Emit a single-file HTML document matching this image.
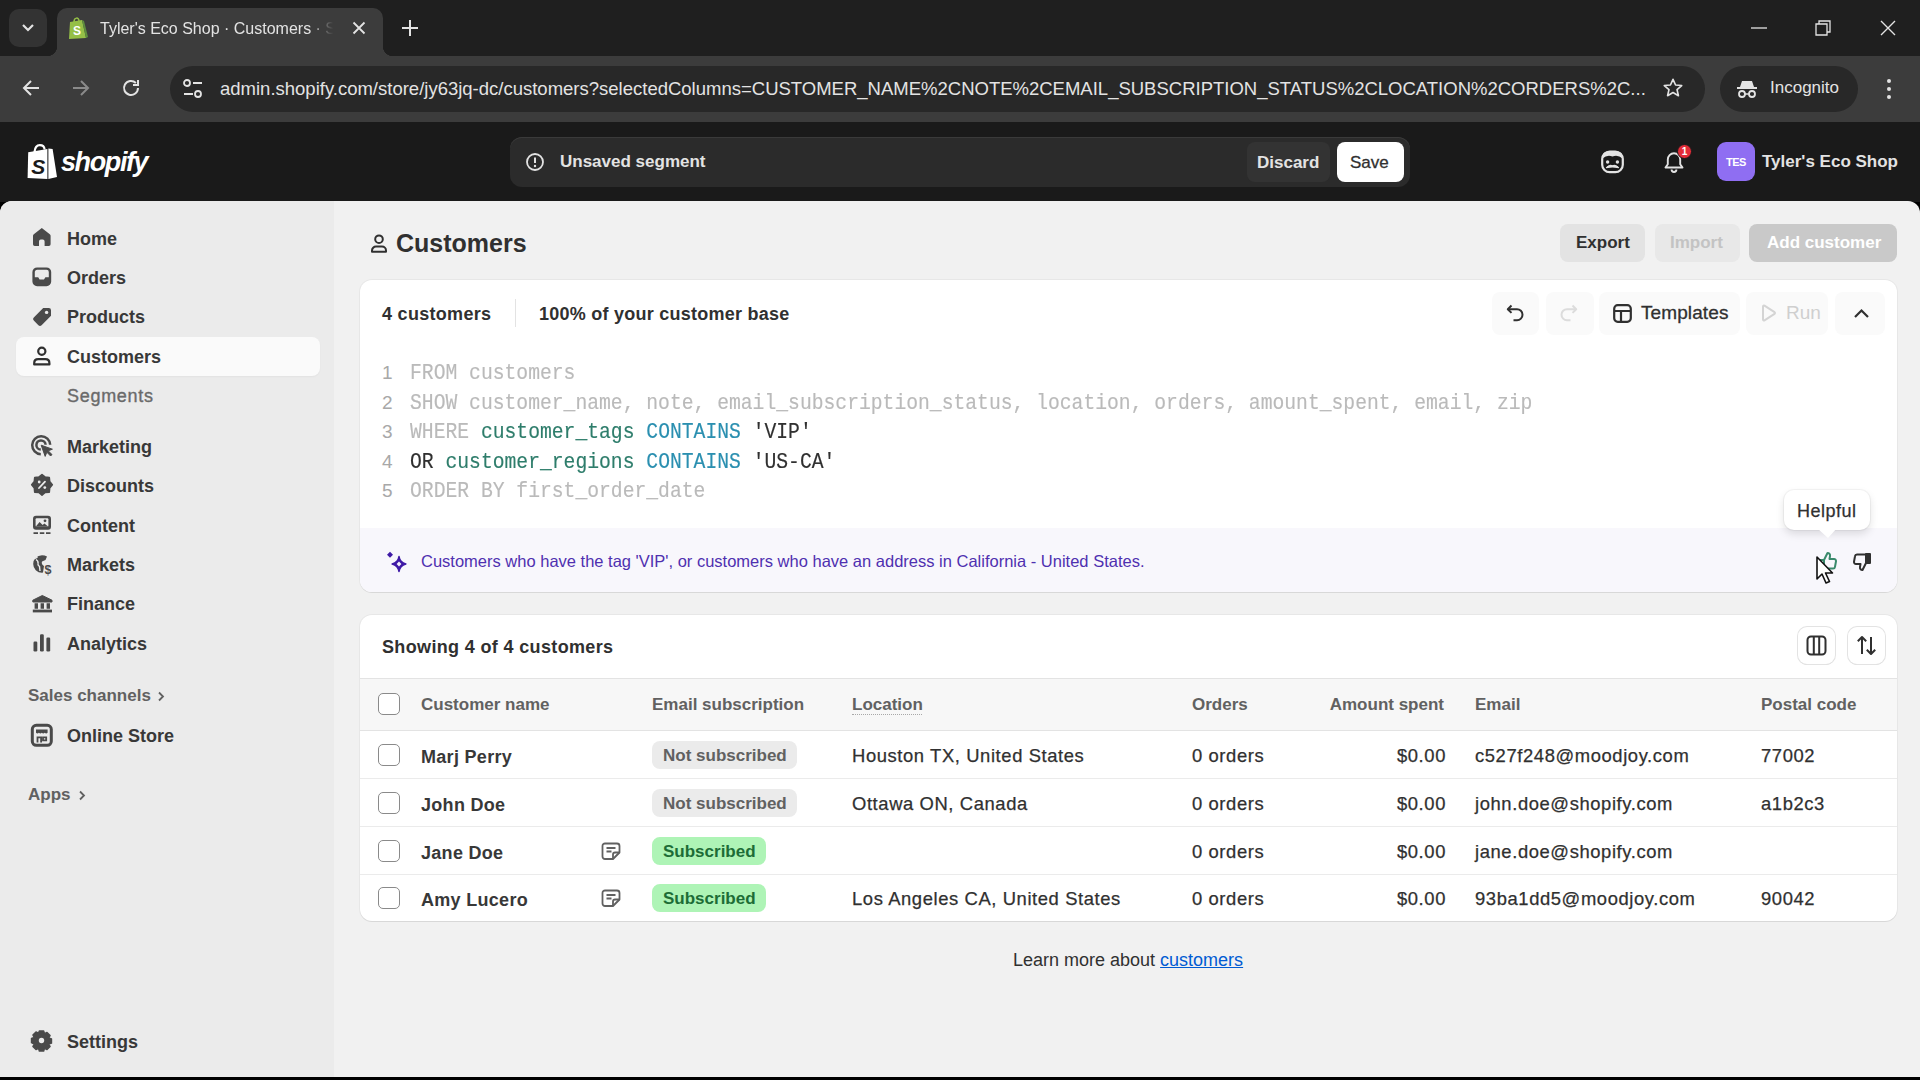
<!DOCTYPE html>
<html><head><meta charset="utf-8">
<style>
*{box-sizing:border-box;margin:0;padding:0}
html,body{width:1920px;height:1080px;overflow:hidden;background:#000;font-family:"Liberation Sans",sans-serif}
.a{position:absolute}
.t{position:absolute;white-space:nowrap;line-height:20px}
svg{position:absolute;overflow:visible}
#tabbar{left:0;top:0;width:1920px;height:56px;background:#1f1f1f}
#toolbar{left:0;top:56px;width:1920px;height:66px;background:#3c3c3c}
#topbar{left:0;top:122px;width:1920px;height:80px;background:#1a1a1a}
#page{left:0;top:201px;width:1920px;height:876px;background:#f1f1f1;border-radius:12px 12px 0 0;overflow:hidden}
#side{left:0;top:0;width:334px;height:876px;background:#ebebeb}
.nav{font-size:18px;font-weight:bold;color:#383838;left:67px;margin-top:1px}
.card{position:absolute;background:#fff;border-radius:12px;box-shadow:0 1px 0 rgba(26,26,26,.07),0 0 0 1px rgba(0,0,0,.04)}
.mono{font-family:"Liberation Mono",monospace;font-size:19.7px;position:absolute;white-space:nowrap;line-height:20px;transform:scaleY(1.13);transform-origin:0 0;-webkit-text-stroke:0.15px currentColor}
.hd{font-size:17px;font-weight:bold;color:#616161;margin-top:1px}
.nm{font-size:18px;font-weight:bold;color:#383838;letter-spacing:0.3px;margin-top:1.5px}
.rw{font-size:18.4px;color:#303030;letter-spacing:0.6px;margin-top:1px;-webkit-text-stroke:0.25px #303030}
.bd{font-size:17px;font-weight:bold;margin-top:1.5px}
</style></head><body>
<!-- TAB BAR -->
<div id="tabbar" class="a">
  <div class="a" style="left:9px;top:9px;width:38px;height:38px;border-radius:10px;background:#333"></div>
  <svg style="left:21px;top:23px" width="14" height="10" viewBox="0 0 14 10"><path d="M2 2l5 5 5-5" stroke="#e3e3e3" stroke-width="2.2" fill="none"/></svg>
  <div class="a" style="left:57px;top:8px;width:326px;height:48px;background:#3c3c3c;border-radius:10px 10px 0 0"></div>
  <svg style="left:67px;top:16px" width="22" height="25" viewBox="0 0 22 25"><path d="M3 6 L15 4 L19 22 L2 23 Z" fill="#95bf47"/><path d="M15 4 L19 22 L21 21 L17 5Z" fill="#5e8e3e"/><path d="M7 6 C7 1 12 1 12 5" stroke="#95bf47" stroke-width="1.5" fill="none"/><text x="6" y="19" font-size="12" font-weight="bold" fill="#fff" font-family="Liberation Sans">S</text></svg>
  <div class="t" style="left:100px;top:19px;font-size:16px;color:#e3e3e3;width:238px;overflow:hidden;-webkit-mask-image:linear-gradient(90deg,#000 88%,transparent 98%)">Tyler's Eco Shop · Customers · Shopify</div>
  <div class="a" style="left:47px;top:46px;width:10px;height:10px;background:radial-gradient(circle at 0 0,#1f1f1f 10px,#3c3c3c 10.5px)"></div>
  <div class="a" style="left:383px;top:46px;width:10px;height:10px;background:radial-gradient(circle at 100% 0,#1f1f1f 10px,#3c3c3c 10.5px)"></div>
  <svg style="left:352px;top:21px" width="14" height="14" viewBox="0 0 14 14"><path d="M1.5 1.5l11 11M12.5 1.5l-11 11" stroke="#e3e3e3" stroke-width="1.8"/></svg>
  <svg style="left:401px;top:19px" width="18" height="18" viewBox="0 0 18 18"><path d="M9 1v16M1 9h16" stroke="#e3e3e3" stroke-width="2"/></svg>
  <svg style="left:1751px;top:27px" width="16" height="2" viewBox="0 0 16 2"><path d="M0 1h16" stroke="#e3e3e3" stroke-width="1.3"/></svg>
  <svg style="left:1815px;top:20px" width="16" height="16" viewBox="0 0 16 16"><path d="M1 4h11v11H1z M4 4V1h11v11h-3" stroke="#e3e3e3" stroke-width="1.3" fill="none"/></svg>
  <svg style="left:1880px;top:20px" width="16" height="16" viewBox="0 0 16 16"><path d="M1 1l14 14M15 1L1 15" stroke="#e3e3e3" stroke-width="1.4"/></svg>
</div>
<!-- TOOLBAR -->
<div id="toolbar" class="a">
  <svg style="left:21px;top:23px" width="20" height="18" viewBox="0 0 20 18"><path d="M18 9H3M10 2L3 9l7 7" stroke="#e3e3e3" stroke-width="2" fill="none"/></svg>
  <svg style="left:71px;top:23px" width="20" height="18" viewBox="0 0 20 18"><path d="M2 9h15M10 2l7 7-7 7" stroke="#8a8a8a" stroke-width="2" fill="none"/></svg>
  <svg style="left:121px;top:22px" width="20" height="20" viewBox="0 0 20 20"><path d="M17 10a7 7 0 1 1-2.1-5" stroke="#e3e3e3" stroke-width="2" fill="none"/><path d="M17 2v5h-5" stroke="#e3e3e3" stroke-width="2" fill="none"/></svg>
  <div class="a" style="left:170px;top:10px;width:1535px;height:46px;border-radius:23px;background:#282828"></div>
  <svg style="left:182px;top:23px" width="22" height="20" viewBox="0 0 22 20"><circle cx="5" cy="4" r="3" stroke="#e3e3e3" stroke-width="1.8" fill="none"/><path d="M11 4h9M2 15h9" stroke="#e3e3e3" stroke-width="1.8"/><circle cx="16" cy="15" r="3" stroke="#e3e3e3" stroke-width="1.8" fill="none"/></svg>
  <div class="t" style="left:220px;top:23px;font-size:18.5px;color:#e3e3e3">admin.shopify.com/store/jy63jq-dc/customers?selectedColumns=CUSTOMER_NAME%2CNOTE%2CEMAIL_SUBSCRIPTION_STATUS%2CLOCATION%2CORDERS%2C...</div>
  <svg style="left:1662px;top:21px" width="22" height="22" viewBox="0 0 24 24"><path d="M12 2.5l2.8 6.2 6.7.6-5.1 4.5 1.5 6.6L12 17l-5.9 3.4 1.5-6.6-5.1-4.5 6.7-.6z" stroke="#e3e3e3" stroke-width="1.8" fill="none" stroke-linejoin="round"/></svg>
  <div class="a" style="left:1720px;top:10px;width:138px;height:46px;border-radius:23px;background:#282828"></div>
  <svg style="left:1736px;top:22px" width="22" height="22" viewBox="0 0 22 22"><path d="M6 3h10l2 6H4z" fill="#e3e3e3"/><path d="M1 10h20" stroke="#e3e3e3" stroke-width="2"/><circle cx="6" cy="16" r="3" stroke="#e3e3e3" stroke-width="1.8" fill="none"/><circle cx="16" cy="16" r="3" stroke="#e3e3e3" stroke-width="1.8" fill="none"/><path d="M9 16h4" stroke="#e3e3e3" stroke-width="1.5"/></svg>
  <div class="t" style="left:1770px;top:22px;font-size:17px;color:#e3e3e3">Incognito</div>
  <svg style="left:1886px;top:22px" width="6" height="22" viewBox="0 0 6 22"><circle cx="3" cy="3" r="2" fill="#e3e3e3"/><circle cx="3" cy="11" r="2" fill="#e3e3e3"/><circle cx="3" cy="19" r="2" fill="#e3e3e3"/></svg>
</div>
<!-- SHOPIFY TOP BAR -->
<div id="topbar" class="a">
  <svg style="left:27px;top:22px" width="31" height="36" viewBox="0 0 31 36"><path d="M1.2 8.2 L20.4 5 V35 L0.6 34 Z" fill="#fff"/><path d="M21.4 4.6 L25.6 5 L30 33 L21.4 35 Z" fill="#fff"/><path d="M7.5 8 Q8.2 1.2 12.8 1.2 Q17.2 1.2 17.6 5.5" stroke="#fff" stroke-width="2.2" fill="none"/><text x="4.2" y="29.5" font-size="21" font-weight="bold" font-style="italic" fill="#1a1a1a" font-family="Liberation Sans">S</text></svg>
  <div class="t" style="left:61px;top:27px;font-size:27px;line-height:27px;font-weight:bold;font-style:italic;color:#fff;letter-spacing:-1.4px">shopify</div>
  <div class="a" style="left:510px;top:15px;width:900px;height:50px;border-radius:12px;background:#2b2b2b;box-shadow:inset 0 1px 0 #3a3a3a"></div>
  <svg style="left:525px;top:30px" width="20" height="20" viewBox="0 0 20 20"><circle cx="10" cy="10" r="8" stroke="#e3e3e3" stroke-width="1.8" fill="none"/><path d="M10 5.5v5.5" stroke="#e3e3e3" stroke-width="2"/><circle cx="10" cy="14" r="1.2" fill="#e3e3e3"/></svg>
  <div class="t" style="left:560px;top:30px;font-size:17px;font-weight:bold;color:#e3e3e3">Unsaved segment</div>
  <div class="a" style="left:1247px;top:20px;width:83px;height:40px;border-radius:8px;background:#333"></div>
  <div class="t" style="left:1257px;top:31px;font-size:17px;font-weight:bold;color:#e3e3e3">Discard</div>
  <div class="a" style="left:1337px;top:20px;width:67px;height:40px;border-radius:8px;background:#fff"></div>
  <div class="t" style="left:1350px;top:31px;font-size:17px;color:#303030;-webkit-text-stroke:0.3px #303030">Save</div>
  <svg style="left:1600px;top:27px" width="25" height="25" viewBox="0 0 25 25"><rect x="2.2" y="2.6" width="20.6" height="20.6" rx="7.5" stroke="#e3e3e3" stroke-width="2.2" fill="none"/><path d="M2.5 9.5 Q7 5.5 12.5 7.5 Q18 5.5 22.5 9.5 V8 Q22.5 2.6 16 2.6 H9 Q2.5 2.6 2.5 8Z" fill="#e3e3e3"/><circle cx="7.6" cy="13" r="1.7" fill="#e3e3e3"/><circle cx="17.4" cy="13" r="1.7" fill="#e3e3e3"/><path d="M6.5 18.6 Q9.5 15.2 12.5 16.8 Q15.5 15.2 18.5 18.6 Q12.5 17.4 6.5 18.6Z" fill="#e3e3e3" stroke="#e3e3e3" stroke-width="1.2" stroke-linejoin="round"/></svg>
  <svg style="left:1663px;top:28px" width="22" height="23" viewBox="0 0 22 23"><path d="M2.5 17.5h17l-2.3-3.2V9.5a6.2 6.2 0 0 0-12.4 0v4.8z" stroke="#e3e3e3" stroke-width="1.9" fill="none" stroke-linejoin="round"/><path d="M8.6 19.6a2.4 2.4 0 0 0 4.8 0" stroke="#e3e3e3" stroke-width="1.9" fill="none"/></svg>
  <div class="a" style="left:1677px;top:22px;width:15px;height:15px;border-radius:50%;background:#e22c38;border:1.5px solid #1a1a1a"></div>
  <div class="t" style="left:1677px;top:20px;width:15px;text-align:center;font-size:10px;font-weight:bold;color:#fff">1</div>
  <div class="a" style="left:1717px;top:20px;width:38px;height:39px;border-radius:9px;background:#8f6ef2"></div>
  <div class="t" style="left:1717px;top:30px;width:38px;text-align:center;font-size:11px;font-weight:bold;color:#fff;letter-spacing:-0.5px">TES</div>
  <div class="t" style="left:1762px;top:30px;font-size:17px;font-weight:bold;color:#e3e3e3">Tyler's Eco Shop</div>
</div>
<!-- PAGE -->
<div id="page" class="a">
  <div id="side" class="a">
  </div>
</div>
<!-- SIDEBAR CONTENT -->
<div class="a" style="left:16px;top:337px;width:304px;height:39px;border-radius:8px;background:#fafafa;box-shadow:0 1px 2px rgba(0,0,0,.04)"></div>
<svg style="left:32px;top:227px" width="20" height="20" viewBox="0 0 20 20"><path d="M9.8 1 L17.8 7.2 Q18.6 7.8 18.6 8.8 V17.2 Q18.6 19 16.8 19 H12.6 V14.6 Q12.6 12.6 10.8 12.6 H8.8 Q7 12.6 7 14.6 V19 H2.8 Q1 19 1 17.2 V8.8 Q1 7.8 1.8 7.2 Z" fill="#4a4a4a"/></svg>
<div class="t nav" style="top:228px">Home</div>
<svg style="left:32px;top:267px" width="20" height="20" viewBox="0 0 20 20"><rect x="1.6" y="1.6" width="16.4" height="16.4" rx="3.5" stroke="#4a4a4a" stroke-width="2.4" fill="none"/><path d="M1.5 10.2 H6.2 L7.6 12.6 H12 L13.4 10.2 H18 V15 Q18 18.2 14.8 18.2 H4.7 Q1.5 18.2 1.5 15 Z" fill="#4a4a4a"/></svg>
<div class="t nav" style="top:267px">Orders</div>
<svg style="left:32px;top:307px" width="20" height="20" viewBox="0 0 20 20"><path d="M11.2 1 H16.8 Q19 1 19 3.2 V8.8 L9.6 18.2 Q8 19.8 6.4 18.2 L1.8 13.6 Q0.2 12 1.8 10.4 Z" fill="#4a4a4a"/><circle cx="14.6" cy="5.4" r="1.7" fill="#ebebeb"/></svg>
<div class="t nav" style="top:306px">Products</div>
<svg style="left:32px;top:346px" width="20" height="20" viewBox="0 0 20 20"><circle cx="9.8" cy="5.2" r="3.6" stroke="#303030" stroke-width="2.2" fill="none"/><path d="M2.2 18.4 V17.2 Q2.2 13.2 6.2 13.2 H13.4 Q17.4 13.2 17.4 17.2 V18.4 Z" stroke="#303030" stroke-width="2.2" fill="none" stroke-linejoin="round"/></svg>
<div class="t nav" style="top:346px">Customers</div>
<div class="t" style="left:67px;top:386px;font-size:18px;color:#6a6a6a;letter-spacing:0.7px;-webkit-text-stroke:0.35px #6a6a6a">Segments</div>
<svg style="left:31px;top:435px" width="22" height="22" viewBox="0 0 22 22"><path d="M19.2 9.8 A9 9 0 1 0 9.8 19.2" stroke="#4a4a4a" stroke-width="2.5" fill="none"/><path d="M14.6 9.8 A4.6 4.6 0 1 0 9.8 14.6" stroke="#4a4a4a" stroke-width="2.5" fill="none"/><path d="M10.2 10.2 L21.4 14.2 L17.2 15.8 L21 19.6 L19.6 21 L15.8 17.2 L14.2 21.4 Z" fill="#4a4a4a" stroke="#4a4a4a" stroke-width="1" stroke-linejoin="round"/></svg>
<div class="t nav" style="top:436px">Marketing</div>
<svg style="left:31px;top:474px" width="22" height="22" viewBox="0 0 22 22"><polygon points="11.00,0.50 14.18,3.13 18.28,3.52 18.67,7.62 21.30,10.80 18.67,13.98 18.28,18.08 14.18,18.47 11.00,21.10 7.82,18.47 3.72,18.08 3.33,13.98 0.70,10.80 3.33,7.62 3.72,3.52 7.82,3.13" fill="#4a4a4a" stroke="#4a4a4a" stroke-width="1.6" stroke-linejoin="round"/><path d="M8 14 L14 7.6" stroke="#ebebeb" stroke-width="1.8" stroke-linecap="round"/><circle cx="8.2" cy="8" r="1.4" fill="#ebebeb"/><circle cx="13.8" cy="13.6" r="1.4" fill="#ebebeb"/></svg>
<div class="t nav" style="top:475px">Discounts</div>
<svg style="left:32px;top:515px" width="20" height="20" viewBox="0 0 20 20"><rect x="1" y="0.8" width="18" height="14" rx="3" fill="#4a4a4a"/><rect x="3.6" y="3.2" width="12.8" height="8.6" rx="1" fill="#ebebeb"/><path d="M3.6 11.8 L7.6 7 L10.6 10 L12.4 8.4 L16.4 11.8 Z" fill="#4a4a4a"/><circle cx="13" cy="5.8" r="1.4" fill="#4a4a4a"/><path d="M1.5 18.2h4.5M7.8 18.2h4.5M14 18.2h4.5" stroke="#4a4a4a" stroke-width="1.8"/></svg>
<div class="t nav" style="top:515px">Content</div>
<svg style="left:32px;top:554px" width="22" height="21" viewBox="0 0 22 21"><path d="M10 1.2 A8.8 8.8 0 0 0 10 18.8 L11 18.6 L12 12 Q9 10 10 7.5 L13.5 6 L15 2.6 Q12.8 1.2 10 1.2 Z" fill="#4a4a4a"/><path d="M4 5.5 Q6.5 7 6 9.5 Q5.5 11 7.5 12.5 L8 17" stroke="#ebebeb" stroke-width="1.4" fill="none"/><path d="M3 4.5 L5.5 3.2" stroke="#ebebeb" stroke-width="1.3"/><text x="12.6" y="19.6" font-size="12.5" font-weight="bold" fill="#4a4a4a" font-family="Liberation Sans">$</text></svg>
<div class="t nav" style="top:554px">Markets</div>
<svg style="left:32px;top:595px" width="21" height="18" viewBox="0 0 21 18"><path d="M10.3 0.5 L20 5.2 V7 H0.8 V5.2 Z" fill="#4a4a4a" stroke="#4a4a4a" stroke-linejoin="round"/><path d="M2.6 8.2h3.4v5.6H2.6zM8.6 8.2h3.4v5.6H8.6zM14.6 8.2h3.4v5.6h-3.4z" fill="#4a4a4a"/><path d="M0.8 14.6h19.2v2.8H0.8z" fill="#4a4a4a"/></svg>
<div class="t nav" style="top:593px">Finance</div>
<svg style="left:32px;top:633px" width="20" height="20" viewBox="0 0 20 20"><rect x="1.5" y="8.5" width="3.8" height="10" rx="1.2" fill="#4a4a4a"/><rect x="8" y="1.2" width="3.8" height="17.3" rx="1.2" fill="#4a4a4a"/><rect x="14.4" y="4.5" width="3.8" height="14" rx="1.2" fill="#4a4a4a"/></svg>
<div class="t nav" style="top:633px">Analytics</div>
<div class="t" style="left:28px;top:686px;font-size:17px;font-weight:bold;color:#616161">Sales channels</div>
<svg style="left:157px;top:691px" width="8" height="11" viewBox="0 0 8 11"><path d="M2 1.5l4 4-4 4" stroke="#616161" stroke-width="1.8" fill="none"/></svg>
<svg style="left:30px;top:723px" width="24" height="25" viewBox="0 0 24 25"><rect x="2.3" y="2.3" width="19" height="20" rx="4" stroke="#4a4a4a" stroke-width="3" fill="none"/><path d="M6 6.5h11.6v3.2q-1.4 1.6-2.9 0q-1.5 1.6-2.9 0q-1.4 1.6-2.9 0q-1.5 1.6-2.9 0z" fill="#4a4a4a"/><path d="M7.5 19.5v-5.2h3.6v5.2M13 14.3h3.2v3h-3.2z" stroke="#4a4a4a" stroke-width="1.8" fill="none"/></svg>
<div class="t nav" style="top:725px">Online Store</div>
<div class="t" style="left:28px;top:785px;font-size:17px;font-weight:bold;color:#616161">Apps</div>
<svg style="left:78px;top:790px" width="8" height="11" viewBox="0 0 8 11"><path d="M2 1.5l4 4-4 4" stroke="#616161" stroke-width="1.8" fill="none"/></svg>
<svg style="left:31px;top:1030px" width="21" height="21" viewBox="0 0 21 21"><path d="M8.3 1h4.4l.8 2.7 2.5-1.3 3.1 3.1-1.3 2.5 2.7.8v4.4l-2.7.8 1.3 2.5-3.1 3.1-2.5-1.3-.8 2.7H8.3l-.8-2.7-2.5 1.3-3.1-3.1 1.3-2.5L.5 12.7V8.3l2.7-.8-1.3-2.5 3.1-3.1 2.5 1.3z" fill="#4a4a4a" stroke="#4a4a4a" stroke-width="1.4" stroke-linejoin="round"/><circle cx="10.5" cy="10.5" r="2.7" fill="#ebebeb"/></svg>
<div class="t nav" style="top:1031px">Settings</div>
<!-- MAIN -->
<!-- header -->
<svg style="left:370px;top:234px" width="18" height="19" viewBox="0 0 18 19"><circle cx="9" cy="5.2" r="3.8" stroke="#303030" stroke-width="2" fill="none"/><path d="M2 17.8v-1.3a4 4 0 0 1 4-4h6a4 4 0 0 1 4 4v1.3z" stroke="#303030" stroke-width="2" fill="none" stroke-linejoin="round"/></svg>
<div class="t" style="left:396px;top:231px;font-size:25px;line-height:25px;font-weight:bold;color:#303030">Customers</div>
<div class="a" style="left:1560px;top:224px;width:85px;height:38px;border-radius:8px;background:#e3e3e3"></div>
<div class="t" style="left:1576px;top:233px;font-size:17px;font-weight:bold;color:#303030">Export</div>
<div class="a" style="left:1655px;top:224px;width:85px;height:38px;border-radius:8px;background:#e8e8e8"></div>
<div class="t" style="left:1670px;top:233px;font-size:17px;font-weight:bold;color:#c3c3c3">Import</div>
<div class="a" style="left:1749px;top:224px;width:148px;height:38px;border-radius:8px;background:#c9c9c9"></div>
<div class="t" style="left:1767px;top:233px;font-size:17px;font-weight:bold;color:#fff">Add customer</div>
<!-- query card -->
<div class="card" style="left:360px;top:280px;width:1537px;height:312px;overflow:hidden">
  <div class="a" style="left:0;top:248px;width:1537px;height:64px;background:#f8f7fc"></div>
</div>
<div class="t" style="left:382px;top:304px;font-size:18px;font-weight:bold;color:#303030;letter-spacing:0.3px">4 customers</div>
<div class="a" style="left:515px;top:299px;width:1px;height:28px;background:#e3e3e3"></div>
<div class="t" style="left:539px;top:304px;font-size:18px;font-weight:bold;color:#303030;letter-spacing:0.25px">100% of your customer base</div>
<div class="a" style="left:1492px;top:292px;width:47px;height:43px;border-radius:8px;background:#fafafa"></div>
<div class="a" style="left:1546px;top:292px;width:48px;height:43px;border-radius:8px;background:#fafafa"></div>
<div class="a" style="left:1599px;top:292px;width:141px;height:43px;border-radius:8px;background:#fafafa"></div>
<div class="a" style="left:1746px;top:292px;width:82px;height:43px;border-radius:8px;background:#fafafa"></div>
<div class="a" style="left:1835px;top:292px;width:50px;height:43px;border-radius:8px;background:#fafafa"></div>
<svg style="left:1506px;top:304px" width="19" height="18" viewBox="0 0 19 18"><path d="M5.5 1.5L1.8 5.2l3.7 3.7" stroke="#303030" stroke-width="2" fill="none" stroke-linejoin="round"/><path d="M2.5 5.2H11a5.5 5.5 0 0 1 0 11H7.5" stroke="#303030" stroke-width="2" fill="none"/></svg>
<svg style="left:1559px;top:304px" width="19" height="18" viewBox="0 0 19 18"><path d="M13.5 1.5l3.7 3.7-3.7 3.7" stroke="#dcdcdc" stroke-width="2" fill="none" stroke-linejoin="round"/><path d="M16.5 5.2H8a5.5 5.5 0 0 0 0 11h3.5" stroke="#dcdcdc" stroke-width="2" fill="none"/></svg>
<svg style="left:1613px;top:304px" width="19" height="19" viewBox="0 0 19 19"><rect x="1.2" y="1.2" width="16.6" height="16.6" rx="3.5" stroke="#303030" stroke-width="2.2" fill="none"/><path d="M1.5 7h16M8 7v10.5" stroke="#303030" stroke-width="2.2"/></svg>
<div class="t" style="left:1641px;top:303px;font-size:19px;color:#303030;letter-spacing:0.1px;-webkit-text-stroke:0.3px #303030">Templates</div>
<svg style="left:1761px;top:304px" width="15" height="18" viewBox="0 0 15 18"><path d="M2 2.5v13a1 1 0 0 0 1.5.9l10-6.5a1 1 0 0 0 0-1.7l-10-6.6A1 1 0 0 0 2 2.5z" stroke="#d4d4d4" stroke-width="2" fill="none"/></svg>
<div class="t" style="left:1786px;top:303px;font-size:19px;color:#cfcfcf">Run</div>
<svg style="left:1853px;top:307px" width="17" height="12" viewBox="0 0 17 12"><path d="M2 10l6.5-6.5L15 10" stroke="#303030" stroke-width="2.2" fill="none"/></svg>
<!-- code -->
<div class="t" style="left:382px;top:363px;color:#a8a8a8;font-size:19px">1</div>
<div class="t" style="left:382px;top:393px;color:#a8a8a8;font-size:19px">2</div>
<div class="t" style="left:382px;top:422px;color:#a8a8a8;font-size:19px">3</div>
<div class="t" style="left:382px;top:452px;color:#a8a8a8;font-size:19px">4</div>
<div class="t" style="left:382px;top:481px;color:#a8a8a8;font-size:19px">5</div>
<div class="mono" style="left:410px;top:362px;color:#bababa">FROM customers</div>
<div class="mono" style="left:410px;top:392px;color:#bababa">SHOW customer_name, note, email_subscription_status, location, orders, amount_spent, email, zip</div>
<div class="mono" style="left:410px;top:421px;color:#bababa">WHERE <span style="color:#2e7d6b">customer_tags</span> <span style="color:#2a8fb0">CONTAINS</span> <span style="color:#303030">'VIP'</span></div>
<div class="mono" style="left:410px;top:451px;color:#303030">OR <span style="color:#2e7d6b">customer_regions</span> <span style="color:#2a8fb0">CONTAINS</span> <span style="color:#303030">'US-CA'</span></div>
<div class="mono" style="left:410px;top:480px;color:#bababa">ORDER BY first_order_date</div>
<!-- ai strip -->
<svg style="left:386px;top:551px" width="22" height="22" viewBox="0 0 22 22"><path d="M4 0.8 L7 3.8 L4 6.8 L1 3.8Z" fill="#3f1aa6"/><path d="M13 5.5 Q13.8 11.2 19.8 13 Q13.8 14.8 13 20.5 Q12.2 14.8 6.2 13 Q12.2 11.2 13 5.5Z" fill="#3f1aa6" stroke="#3f1aa6" stroke-width="1.6" stroke-linejoin="round"/><path d="M13 10.6 L15.4 13 L13 15.4 L10.6 13Z" fill="#f3eefc"/></svg>
<div class="t" style="left:421px;top:551px;font-size:16.5px;color:#4f30b0">Customers who have the tag 'VIP', or customers who have an address in California - United States.</div>
<svg style="left:1818px;top:551px" width="21" height="20" viewBox="0 0 21 20"><path d="M6 9l3.5-7c1.8 0 2.8 1.2 2.5 3l-.5 3h4.5a2 2 0 0 1 2 2.3l-1 5.5a2 2 0 0 1-2 1.7H6z" stroke="#3a8a6c" stroke-width="2" fill="none" stroke-linejoin="round"/><path d="M2 9h4v9H2z" stroke="#3a8a6c" stroke-width="2" fill="none"/></svg>
<svg style="left:1851px;top:552px" width="21" height="20" viewBox="0 0 21 20"><path d="M15 11l-3.5 7c-1.8 0-2.8-1.2-2.5-3l.5-3H5a2 2 0 0 1-2-2.3l1-5.5A2 2 0 0 1 6 2.5h9z" stroke="#303030" stroke-width="2" fill="none" stroke-linejoin="round"/><path d="M15 2h4v9h-4z" fill="#303030" stroke="#303030" stroke-width="2" stroke-linejoin="round"/></svg>
<svg style="left:1816px;top:556px" width="20" height="30" viewBox="0 0 20 30"><path d="M1 1v22l5-5 4 9 3.5-1.5-4-8.5h7z" fill="#fff" stroke="#111" stroke-width="1.6" stroke-linejoin="round"/></svg>
<!-- tooltip -->
<div class="a" style="left:1784px;top:490px;width:86px;height:40px;border-radius:10px;background:#fff;box-shadow:0 4px 8px rgba(0,0,0,.12),0 0 0 1px rgba(0,0,0,.04)"></div>
<svg style="left:1817px;top:528px" width="20" height="11" viewBox="0 0 20 11"><path d="M0 0h20l-9 10z" fill="#fff"/></svg>
<div class="t" style="left:1797px;top:501px;font-size:18px;color:#303030;letter-spacing:0.5px;-webkit-text-stroke:0.25px #303030">Helpful</div>
<!-- table card -->
<div class="card" style="left:360px;top:615px;width:1537px;height:306px;overflow:hidden">
  <div class="a" style="left:0;top:63px;width:1537px;height:53px;background:#f7f7f7;border-top:1px solid #e3e3e3;border-bottom:1px solid #e3e3e3"></div>
  <div class="a" style="left:0;top:163px;width:1537px;height:1px;background:#ebebeb"></div>
  <div class="a" style="left:0;top:211px;width:1537px;height:1px;background:#ebebeb"></div>
  <div class="a" style="left:0;top:259px;width:1537px;height:1px;background:#ebebeb"></div>
</div>
<div class="t" style="left:382px;top:637px;font-size:18px;font-weight:bold;color:#303030;letter-spacing:0.35px">Showing 4 of 4 customers</div>
<div class="a" style="left:1798px;top:627px;width:37px;height:37px;border-radius:9px;background:#fff;box-shadow:0 0 0 1px #e3e3e3,0 1px 0 #d4d4d4"></div>
<svg style="left:1806px;top:635px" width="21" height="21" viewBox="0 0 21 21"><rect x="1.5" y="1.5" width="18" height="18" rx="3.5" stroke="#303030" stroke-width="2" fill="none"/><path d="M7.8 1.5v18M13.2 1.5v18" stroke="#303030" stroke-width="2"/></svg>
<div class="a" style="left:1848px;top:627px;width:37px;height:37px;border-radius:9px;background:#fff;box-shadow:0 0 0 1px #e3e3e3,0 1px 0 #d4d4d4"></div>
<svg style="left:1856px;top:635px" width="21" height="21" viewBox="0 0 21 21"><path d="M6 19V2M1.8 6.2L6 2l4.2 4.2M15 2v17M10.8 14.8L15 19l4.2-4.2" stroke="#303030" stroke-width="2" fill="none" stroke-linejoin="round"/></svg>
<div class="a" style="left:378px;top:693px;width:22px;height:22px;border-radius:5px;border:1.3px solid #8a8a8a;background:#fff"></div>
<div class="t hd" style="left:421px;top:694px">Customer name</div>
<div class="t hd" style="left:652px;top:694px">Email subscription</div>
<div class="t hd" style="left:852px;top:694px">Location</div>
<div class="t hd" style="left:1192px;top:694px">Orders</div>
<div class="t hd" style="left:1475px;top:694px">Email</div>
<div class="t hd" style="left:1761px;top:694px">Postal code</div>
<div class="t hd" style="left:1244px;width:200px;text-align:right;top:694px">Amount spent</div>
<div class="a" style="left:852px;top:714px;width:70px;border-top:1.5px dotted #a8a8a8"></div>
<div class="a" style="left:378px;top:744px;width:22px;height:22px;border-radius:5px;border:1.3px solid #8a8a8a;background:#fff"></div>
<div class="t nm" style="left:421px;top:745px">Marj Perry</div>
<div class="a" style="left:652px;top:741px;width:145px;height:28px;border-radius:8px;background:#ebebeb"></div>
<div class="t bd" style="left:663px;top:744px;color:#616161">Not subscribed</div>
<div class="t rw" style="left:852px;top:745px">Houston TX, United States</div>
<div class="t rw" style="left:1192px;top:745px">0 orders</div>
<div class="t rw" style="left:1246px;width:200px;text-align:right;top:745px">$0.00</div>
<div class="t rw" style="left:1475px;top:745px">c527f248@moodjoy.com</div>
<div class="t rw" style="left:1761px;top:745px">77002</div>
<div class="a" style="left:378px;top:792px;width:22px;height:22px;border-radius:5px;border:1.3px solid #8a8a8a;background:#fff"></div>
<div class="t nm" style="left:421px;top:793px">John Doe</div>
<div class="a" style="left:652px;top:789px;width:145px;height:28px;border-radius:8px;background:#ebebeb"></div>
<div class="t bd" style="left:663px;top:792px;color:#616161">Not subscribed</div>
<div class="t rw" style="left:852px;top:793px">Ottawa ON, Canada</div>
<div class="t rw" style="left:1192px;top:793px">0 orders</div>
<div class="t rw" style="left:1246px;width:200px;text-align:right;top:793px">$0.00</div>
<div class="t rw" style="left:1475px;top:793px">john.doe@shopify.com</div>
<div class="t rw" style="left:1761px;top:793px">a1b2c3</div>
<div class="a" style="left:378px;top:840px;width:22px;height:22px;border-radius:5px;border:1.3px solid #8a8a8a;background:#fff"></div>
<div class="t nm" style="left:421px;top:841px">Jane Doe</div>
<svg style="left:601px;top:842px" width="20" height="19" viewBox="0 0 20 19"><path d="M4 1.5h12a2.5 2.5 0 0 1 2.5 2.5v6.5L12 17H4A2.5 2.5 0 0 1 1.5 14.5V4A2.5 2.5 0 0 1 4 1.5z" stroke="#616161" stroke-width="1.8" fill="none" stroke-linejoin="round"/><path d="M5.5 6h9M5.5 9.5h5" stroke="#616161" stroke-width="1.8"/><path d="M12 17v-4.5a2 2 0 0 1 2-2h4.5" stroke="#616161" stroke-width="1.8" fill="none"/></svg>
<div class="a" style="left:652px;top:837px;width:114px;height:28px;border-radius:8px;background:#aef4b6"></div>
<div class="t bd" style="left:663px;top:840px;color:#1d6d36">Subscribed</div>
<div class="t rw" style="left:1192px;top:841px">0 orders</div>
<div class="t rw" style="left:1246px;width:200px;text-align:right;top:841px">$0.00</div>
<div class="t rw" style="left:1475px;top:841px">jane.doe@shopify.com</div>
<div class="a" style="left:378px;top:887px;width:22px;height:22px;border-radius:5px;border:1.3px solid #8a8a8a;background:#fff"></div>
<div class="t nm" style="left:421px;top:888px">Amy Lucero</div>
<svg style="left:601px;top:889px" width="20" height="19" viewBox="0 0 20 19"><path d="M4 1.5h12a2.5 2.5 0 0 1 2.5 2.5v6.5L12 17H4A2.5 2.5 0 0 1 1.5 14.5V4A2.5 2.5 0 0 1 4 1.5z" stroke="#616161" stroke-width="1.8" fill="none" stroke-linejoin="round"/><path d="M5.5 6h9M5.5 9.5h5" stroke="#616161" stroke-width="1.8"/><path d="M12 17v-4.5a2 2 0 0 1 2-2h4.5" stroke="#616161" stroke-width="1.8" fill="none"/></svg>
<div class="a" style="left:652px;top:884px;width:114px;height:28px;border-radius:8px;background:#aef4b6"></div>
<div class="t bd" style="left:663px;top:887px;color:#1d6d36">Subscribed</div>
<div class="t rw" style="left:852px;top:888px">Los Angeles CA, United States</div>
<div class="t rw" style="left:1192px;top:888px">0 orders</div>
<div class="t rw" style="left:1246px;width:200px;text-align:right;top:888px">$0.00</div>
<div class="t rw" style="left:1475px;top:888px">93ba1dd5@moodjoy.com</div>
<div class="t rw" style="left:1761px;top:888px">90042</div>
<!-- footer -->
<div class="t" style="left:1013px;top:950px;font-size:18px;color:#303030">Learn more about <span style="color:#005bd3;text-decoration:underline">customers</span></div>


<div class="a" style="left:0;top:1077px;width:1920px;height:3px;background:#000"></div>
</body></html>
